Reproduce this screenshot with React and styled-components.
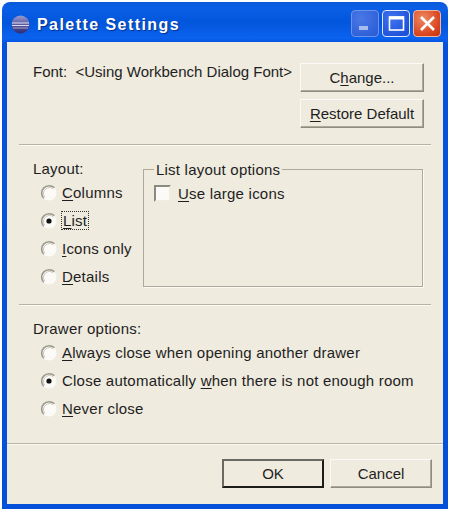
import React from 'react'
import styled, { createGlobalStyle } from 'styled-components'

const Global = createGlobalStyle`
  html, body {
    margin: 0;
    padding: 0;
    background: #fff;
  }
  body {
    font-family: 'Liberation Sans', Arial, sans-serif;
    font-size: 15px;
    letter-spacing: 0.22px;
    color: #1e1e1e;
  }
`

const Page = styled.div`
  width: 452px;
  height: 512px;
  padding: 2px 0 0 2px;
  box-sizing: border-box;
`

const Frame = styled.div`
  width: 446px;
  height: 507px;
  box-sizing: border-box;
  padding: 0 5px 5px;
  display: flex;
  flex-direction: column;
  border-radius: 8px 8px 0 0;
  background: linear-gradient(180deg, #0a5ad8 0, #0a5fe6 6px, #0256dc 20px, #0a62ee 36px, #0553dc 42px, #0550d8 100%);
`

const TitleBar = styled.div`
  height: 40px;
  flex: none;
  box-sizing: border-box;
  display: flex;
  align-items: center;
  gap: 7px;
  padding: 5px 2px 0 4px;
`

const TitleText = styled.span`
  font: bold 16px 'Liberation Sans', Arial, sans-serif;
  letter-spacing: 1.44px;
  color: #fff;
  text-shadow: 1px 1px 1px #0a2f8c;
  flex: 1;
`

const CtrlButton = styled.div`
  width: 28px;
  height: 27px;
  box-sizing: border-box;
  border: 1px solid ${p => (p.$close ? '#f0b8a0' : p.$active ? '#dfe8fb' : '#6f93ea')};
  border-radius: 4px;
  display: flex;
  align-items: center;
  justify-content: center;
  background: ${p =>
    p.$close
      ? 'radial-gradient(circle at 35% 30%, #ee8a63, #d8431c 70%, #c2350f)'
      : p.$active
      ? 'radial-gradient(circle at 35% 30%, #3f74ee, #1f50d8 80%)'
      : 'radial-gradient(circle at 35% 30%, #4a78e4, #2d5fd8 80%)'};
`

const Controls = styled.div`
  display: flex;
  gap: 3px;
  margin-top: -3px;
`

const Client = styled.div`
  flex: 1;
  background: #efebdf;
  display: flex;
  flex-direction: column;
`

const FontSection = styled.div`
  height: 102px;
  flex: none;
  box-sizing: border-box;
  padding: 21px 19px 0 26px;
  display: flex;
  justify-content: space-between;
`

const FontLabel = styled.div`
  line-height: 17px;
  white-space: nowrap;
  letter-spacing: 0;
`

const ButtonColumn = styled.div`
  display: flex;
  flex-direction: column;
  gap: 7px;
`

const Button = styled.div`
  width: ${p => p.$w || 124}px;
  height: 29px;
  box-sizing: border-box;
  display: flex;
  align-items: center;
  justify-content: center;
  background: #efebdf;
  letter-spacing: 0;
  ${p =>
    p.$default
      ? 'border: 2px solid; border-color: #6b6a62 #1c1c18 #1c1c18 #6b6a62;'
      : 'border: 1px solid; border-color: #fbfaf4 #8f8d80 #8f8d80 #fbfaf4; box-shadow: inset -1px -1px 0 #aca899;'}
`

const Separator = styled.div`
  height: 2px;
  flex: none;
  margin: ${p => (p.$full ? '0' : '0 12px 0 12px')};
  background: linear-gradient(180deg, #b6b3a4 50%, #fbfaf4 50%);
`

const LayoutSection = styled.div`
  height: 158px;
  flex: none;
  box-sizing: border-box;
  padding: 14px 19px 0 26px;
  display: flex;
  gap: 17px;
`

const LayoutColumn = styled.div`
  width: 93px;
  flex: none;
`

const Heading = styled.div`
  height: 17px;
  line-height: 17px;
`

const OptionList = styled.div`
  display: flex;
  flex-direction: column;
  gap: 11px;
  margin-top: 7px;
  margin-left: 7px;
`

const Option = styled.div`
  display: flex;
  align-items: center;
  gap: ${p => p.$gap || 4}px;
  height: 17px;
  white-space: nowrap;
  margin-top: ${p => p.$top || 0}px;
`

const Focused = styled.span`
  outline: 1px dotted #333;
  outline-offset: 0;
  padding: 0 1px;
`

const Key = styled.span`
  text-decoration: underline;
  text-underline-offset: 2px;
`

const GroupBox = styled.fieldset`
  width: 280px;
  height: 126px;
  box-sizing: border-box;
  margin: 1px 0 0;
  padding: 0 0 0 10px;
  border: 1px solid #aeaa9b;
  box-shadow: 1px 1px 0 #fbfaf4;
`

const GroupLegend = styled.legend`
  padding: 0 2px;
  margin-left: 0;
  line-height: 17px;
`

const CheckBox = styled.span`
  display: block;
  width: 17px;
  height: 17px;
  box-sizing: border-box;
  background: #fbfaf6;
  border: 2px solid;
  border-color: #8b8a80 #f0ece0 #f0ece0 #8b8a80;
`

const DrawerSection = styled.div`
  height: 137px;
  flex: none;
  box-sizing: border-box;
  padding: 14px 0 0 26px;
`

const Footer = styled.div`
  flex: 1;
  display: flex;
  justify-content: flex-end;
  gap: 6px;
  padding: 14px 11px 0 0;
`

const RadioDot = ({ checked }) => (
  <svg width="18" height="18" viewBox="0 0 18 18" style={{ flex: 'none' }}>
    <circle cx="9" cy="9" r="7.5" fill="#fbfaf6" />
    <path d="M3.7 14.3A7.5 7.5 0 0 1 14.3 3.7" fill="none" stroke="#9a988c" strokeWidth="1.6" />
    <path d="M4.8 13.2A6 6 0 0 1 13.2 4.8" fill="none" stroke="#cdc9ba" strokeWidth="1" />
    {checked && <circle cx="9" cy="9" r="2.6" fill="#111" />}
  </svg>
)

const EclipseIcon = () => (
  <svg width="19" height="19" viewBox="0 0 19 19">
    <defs>
      <linearGradient id="ecl" x1="0" y1="0" x2="0" y2="1">
        <stop offset="0" stopColor="#9a9ad0" />
        <stop offset="0.5" stopColor="#5a5aa0" />
        <stop offset="1" stopColor="#2d2a70" />
      </linearGradient>
    </defs>
    <circle cx="9.5" cy="9.5" r="9" fill="url(#ecl)" />
    <path d="M1 8h17M1 10.5h17" stroke="#dcdcee" strokeWidth="1" />
    <path d="M2 13h15" stroke="#b8b6d8" strokeWidth="0.8" />
  </svg>
)

const MinimizeGlyph = () => (
  <svg width="25" height="25" viewBox="0 0 25 25">
    <rect x="6" y="15" width="9" height="4" fill="#a9bbee" />
  </svg>
)

const MaximizeGlyph = () => (
  <svg width="25" height="25" viewBox="0 0 25 25" fill="none">
    <rect x="5.5" y="6" width="14" height="13" stroke="#fff" strokeWidth="1.6" />
    <rect x="5" y="5.5" width="15" height="3" fill="#fff" />
  </svg>
)

const CloseGlyph = () => (
  <svg width="25" height="25" viewBox="0 0 25 25">
    <path d="M6 6l13 13M19 6L6 19" stroke="#fff" strokeWidth="2.6" />
  </svg>
)

export default function App() {
  return (
    <Page>
      <Global />
      <Frame>
        <TitleBar>
          <EclipseIcon />
          <TitleText>Palette Settings</TitleText>
          <Controls>
            <CtrlButton><MinimizeGlyph /></CtrlButton>
            <CtrlButton $active><MaximizeGlyph /></CtrlButton>
            <CtrlButton $close><CloseGlyph /></CtrlButton>
          </Controls>
        </TitleBar>
        <Client>
          <FontSection>
            <FontLabel>Font:&nbsp; &lt;Using Workbench Dialog Font&gt;</FontLabel>
            <ButtonColumn>
              <Button>C<Key>h</Key>ange...</Button>
              <Button><Key>R</Key>estore Default</Button>
            </ButtonColumn>
          </FontSection>
          <Separator />
          <LayoutSection>
            <LayoutColumn>
              <Heading>Layout:</Heading>
              <OptionList>
                <Option><RadioDot /><span><Key>C</Key>olumns</span></Option>
                <Option><RadioDot checked /><Focused><Key>L</Key>ist</Focused></Option>
                <Option><RadioDot /><span><Key>I</Key>cons only</span></Option>
                <Option><RadioDot /><span><Key>D</Key>etails</span></Option>
              </OptionList>
            </LayoutColumn>
            <GroupBox>
              <GroupLegend>List layout options</GroupLegend>
              <Option $gap={7} $top={7}><CheckBox /><span><Key>U</Key>se large icons</span></Option>
            </GroupBox>
          </LayoutSection>
          <Separator />
          <DrawerSection>
            <Heading>Drawer options:</Heading>
            <OptionList>
              <Option><RadioDot /><span><Key>A</Key>lways close when opening another drawer</span></Option>
              <Option><RadioDot checked /><span>Close automatically <Key>w</Key>hen there is not enough room</span></Option>
              <Option><RadioDot /><span><Key>N</Key>ever close</span></Option>
            </OptionList>
          </DrawerSection>
          <Separator $full />
          <Footer>
            <Button $w={102} $default>OK</Button>
            <Button $w={102}>Cancel</Button>
          </Footer>
        </Client>
      </Frame>
    </Page>
  )
}
